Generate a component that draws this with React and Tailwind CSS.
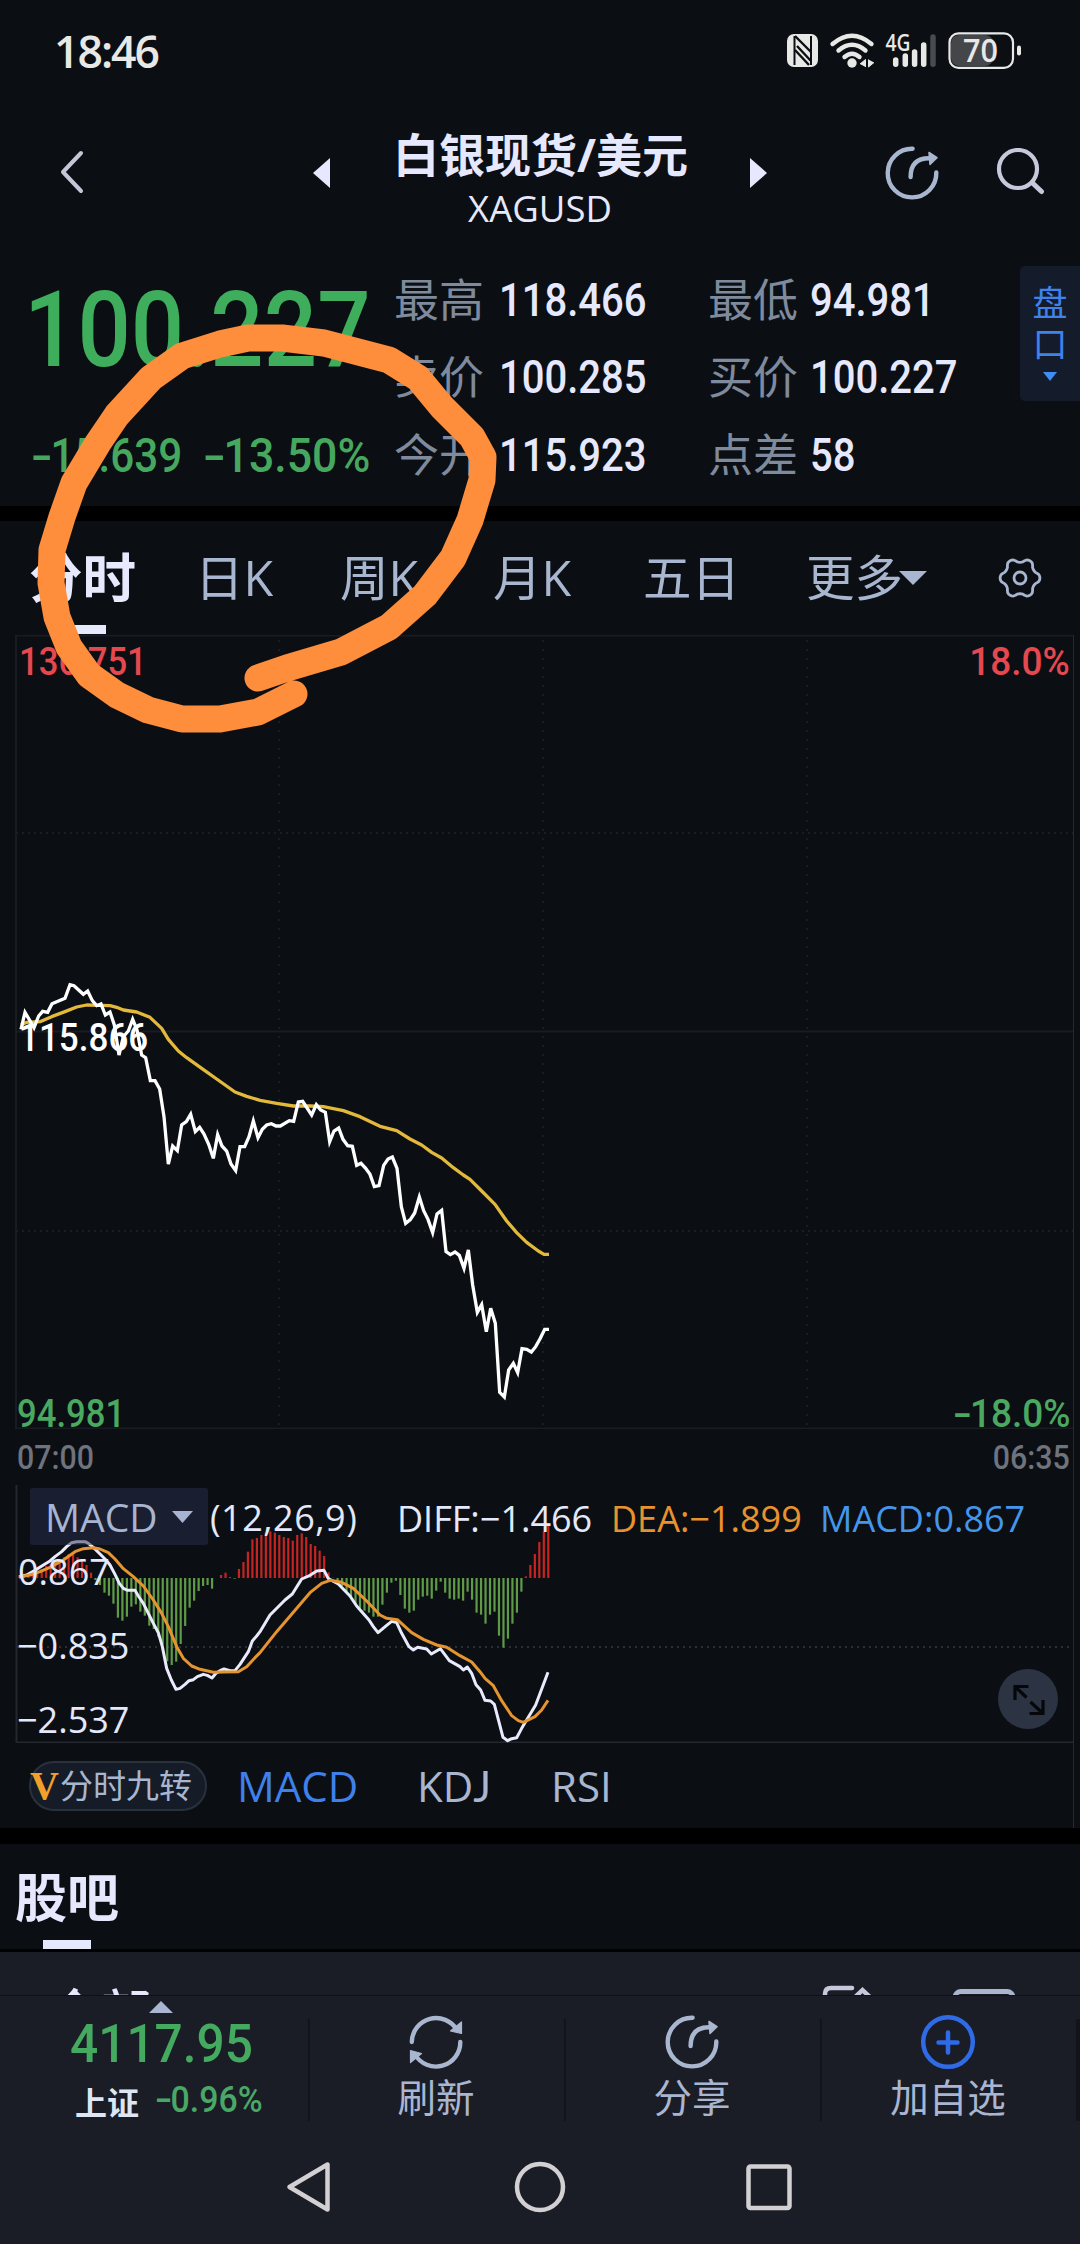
import React from 'react';

// Intraday price and average, x / y in thirds of a pixel
const PRICE_A = [
  [63, 208], [75, 157], [102, 203], [116, 168], [128, 154], [143, 157], [156, 131], [195, 115], [210, 74], [222, 77],
  [250, 103], [263, 93], [277, 122], [290, 137], [303, 132], [316, 165], [330, 156], [343, 195], [357, 285], [370, 230],
  [385, 213], [398, 178], [411, 210], [425, 285], [437, 293], [451, 362], [465, 362], [479, 387], [492, 470], [505, 612],
  [518, 558], [532, 572], [545, 495], [559, 485], [572, 463], [586, 515], [599, 502], [612, 522], [626, 553], [640, 595],
  [653, 524], [666, 558], [680, 573], [693, 612], [707, 632], [720, 560], [734, 560], [747, 530], [760, 483], [774, 533],
  [787, 508], [800, 495], [814, 491], [828, 498], [841, 498], [868, 482],
];
const PRICE_B = [
  [101, 214], [115, 156], [128, 154], [155, 195], [169, 164], [182, 180], [196, 187], [209, 275], [222, 243], [236, 234],
  [249, 268], [263, 287], [277, 289], [290, 346], [303, 340], [317, 355], [330, 373], [343, 410], [357, 407], [371, 346],
  [384, 327], [397, 321], [411, 355], [424, 470], [437, 520], [451, 509], [464, 489], [478, 441], [491, 482], [504, 508],
  [518, 548], [531, 492], [545, 481], [558, 605], [571, 614], [585, 606], [598, 616], [612, 655], [625, 600], [638, 705],
  [652, 787], [665, 764], [679, 845], [692, 775], [706, 820], [719, 1027], [733, 1041], [746, 960], [760, 940], [773, 968],
  [786, 896], [800, 898], [814, 906], [827, 890], [841, 865], [854, 838], [867, 838],
];
const AVG_A = [
  [63, 195], [80, 187], [120, 185], [155, 170], [195, 155], [230, 141], [260, 135], [300, 136], [330, 137], [350, 142],
  [370, 150], [410, 156], [450, 172], [485, 205], [505, 238], [535, 273], [560, 293], [605, 325], [650, 357], [705, 396],
  [740, 409],
];
const AVG_B = [
  [0, 151], [50, 160], [100, 168], [150, 168], [190, 170], [250, 182], [300, 200], [360, 229], [410, 242], [450, 267],
  [485, 285], [515, 307], [545, 324], [580, 353], [610, 375], [630, 388], [665, 423], [705, 463], [740, 513], [770, 548],
  [800, 577], [835, 603], [852, 613], [867, 613],
];

const DIFF_A = [
  [57, 290], [80, 285], [110, 268], [135, 252], [150, 243], [165, 230], [185, 215], [200, 200], [215, 188], [230, 185],
  [255, 185], [265, 190], [280, 202], [300, 222], [318, 240], [330, 255], [345, 283], [358, 310], [370, 325], [383, 331],
  [405, 331], [415, 348], [430, 370], [445, 400], [460, 430], [475, 458], [487, 500], [500, 565], [514, 600], [528, 628],
  [540, 625], [555, 613], [567, 602], [580, 599], [592, 590], [610, 583], [622, 586], [636, 594], [648, 580], [660, 572],
  [672, 567], [690, 572], [705, 572], [720, 553], [745, 515], [757, 483], [770, 468],
];
const DIFF_B = [
  [0, 455], [30, 405], [75, 360], [97, 342], [125, 297], [150, 286], [170, 273], [192, 271], [205, 296], [235, 312],
  [270, 348], [290, 378], [327, 420], [340, 440], [354, 458], [380, 436], [395, 424], [410, 428], [425, 460], [447, 500],
  [460, 510], [473, 502], [500, 507], [514, 522], [541, 506], [568, 542], [600, 560], [610, 570], [622, 561], [635, 580],
  [648, 614], [662, 630], [675, 661], [692, 663], [703, 673], [718, 730], [729, 772], [743, 782], [755, 776], [770, 773],
  [785, 745], [827, 675], [864, 577],
];
const DEA_A = [
  [57, 291], [90, 285], [120, 275], [150, 262], [190, 240], [225, 215], [250, 206], [280, 203], [300, 207], [325, 218],
  [345, 237], [370, 266], [400, 290], [430, 318], [460, 360], [485, 400], [505, 440], [530, 500], [550, 535], [575, 558],
  [600, 568], [640, 577], [670, 576], [715, 575], [740, 560], [765, 533],
];
const DEA_B = [
  [0, 518], [50, 455], [100, 397], [150, 338], [185, 310], [210, 301], [245, 307], [280, 325], [320, 363], [360, 405],
  [380, 415], [412, 419], [455, 458], [490, 478], [530, 495], [560, 502], [600, 527], [635, 546], [660, 575], [675, 595],
  [700, 617], [725, 662], [755, 707], [775, 722], [790, 727], [825, 710], [845, 690], [864, 661],
];

const BARS = [
  5, 7, 10, 14, 19, 26, 36, 42, 49, 56, 62, 72, 71, 62, 51, 39, 16, -6, -21, -44, -53, -77, -119, -128, -116, -86, -79,
  -101, -113, -143, -153, -176, -200, -250, -261, -251, -198, -144, -89, -68, -39, -24, -21, -32, 0, 9, 16, 3, -2, 27,
  48, 79, 116, 120, 129, 136, 140, 136, 129, 123, 120, 112, 129, 134, 123, 102, 96, 82, 66, 17, 1, -9, -24, -41, -56,
  -76, -91, -98, -104, -116, -116, -80, -44, -14, -8, -51, -92, -104, -98, -65, -56, -53, -62, -38, -11, -44, -62, -65,
  -62, -68, -41, -65, -104, -110, -137, -110, -101, -173, -209, -182, -137, -104, -41, 5, 39, 72, 108, 139, 164,
];

const MARK =
  '258,678 287,668 341,652 389,627 425,595 453,558 470,520 482,480 483,457 472,437 442,407 418,378 389,360 324,343 282,338 248,338 220,344 182,356 151,378 117,415 98,443 74,483 62,517 52,550 51,583 57,617 69,647 89,675 117,695 148,710 182,719 220,719 258,712 294,694';

const toPoints = (data, ox, oy) => data.map(([x, y]) => `${ox + x / 3},${oy + y / 3}`).join(' ');

const gearPath = () => {
  const pts = [];
  for (let i = 0; i < 72; i++) {
    const a = (i / 72) * Math.PI * 2;
    const c = Math.cos(6 * a);
    const r = 17.8 + 2.1 * Math.sign(c) * Math.pow(Math.abs(c), 0.6);
    pts.push(`${(22 + r * Math.cos(a)).toFixed(2)},${(22 + r * Math.sin(a)).toFixed(2)}`);
  }
  return pts.join(' ');
};

const Num = ({ className = '', children }) => (
  <span className={`inline-block font-medium whitespace-nowrap [font-family:Roboto,sans-serif] ${className}`}>{children}</span>
);

const Minus = () => <span className="inline-block w-[0.46em] origin-left scale-x-150">-</span>;

const ShareIcon = () => (
  <svg width="56" height="56" viewBox="0 0 56 56" fill="none" stroke="#a9b6cf" strokeWidth="4.4" strokeLinecap="round">
    <path d="M28.6 3.8A24.3 24.3 0 1 0 52.3 27.5" />
    <path d="M26.6 32C26.6 20.500 32 13.300 45 13.300" />
    <path d="M45 7.500L53 12.600L46 19.500Z" fill="#a9b6cf" strokeWidth="1.500" strokeLinejoin="round" />
  </svg>
);

const StatusBar = () => (
  <div className="flex h-[102px] items-center pl-[54px] text-[#e8e8e6]">
    <span className="w-[730px] text-[44.5px] leading-[60px] font-semibold tracking-[-2px]">18:46</span>
    <svg className="overflow-visible" width="240" height="40" viewBox="784 31 240 40" fill="none">
      <rect x="787" y="34" width="31" height="33" rx="7" fill="#e8e8e6" />
      <path d="M794.500 36V65M811 36V65" stroke="#0b0f14" strokeWidth="2" />
      <path d="M795 36L811 52M797 46L811 61M795 50L809 65" stroke="#0b0f14" strokeWidth="2.400" />
      <g stroke="#e8e8e6" strokeWidth="4.400" strokeLinecap="round">
        <path d="M832.500 44Q852 27.500 871.500 44" />
        <path d="M838.500 50.500Q852 39 865.500 50.500" />
        <path d="M844.500 57Q852 50.500 859.500 57" />
      </g>
      <circle cx="852" cy="63" r="4.700" fill="#e8e8e6" />
      <path d="M860 64L865.500 59.500V67M868.500 59.500V67L874 62.500" fill="#e8e8e6" stroke="#e8e8e6" strokeWidth="1" />
      <g strokeWidth="5.500" strokeLinecap="round" stroke="#e8e8e6">
        <path d="M895.700 60V64.300M905.300 56V64.300M914.600 52V64.300M923.700 45V64.300" />
        <path d="M933 37V64.300" stroke="#4a4b4e" />
      </g>
      <text x="885.500" y="51" fontSize="23" fontWeight="600" fill="#e8e8e6" textLength="25" lengthAdjust="spacingAndGlyphs">4G</text>
      <rect x="951" y="35" width="42" height="31" rx="8" fill="#45464a" />
      <rect x="949.500" y="33.300" width="63.500" height="34.500" rx="9" stroke="#e8e8e6" strokeWidth="2.200" />
      <path d="M1019 47.500V53.500" stroke="#e8e8e6" strokeWidth="4" strokeLinecap="round" />
      <text x="963" y="62" fontSize="32" fontWeight="600" fill="#e8e8e6" textLength="35" lengthAdjust="spacingAndGlyphs">70</text>
    </svg>
  </div>
);

const Header = () => (
  <div className="flex h-[142px] items-center">
    <svg className="ml-[58px] mr-[228px]" width="27" height="48" viewBox="0 0 27 48" fill="none">
      <path d="M23 4L5 23L23 42" stroke="#c5c7d8" strokeWidth="4" strokeLinecap="round" strokeLinejoin="round" />
    </svg>
    <svg width="17" height="30" viewBox="0 0 17 30"><path d="M17 0V30L0 15Z" fill="#e6e8fd" /></svg>
    <div className="flex h-full w-[420px] flex-col items-center pt-[29px] text-[#e6e8fd]">
      <h1 className="pl-[1px] text-[46px] leading-[46px] font-bold whitespace-nowrap">白银现货/美元</h1>
      <span className="mt-[13px] text-[36.5px] leading-[36px]">XAGUSD</span>
    </div>
    <svg width="17" height="30" viewBox="0 0 17 30"><path d="M0 0V30L17 15Z" fill="#e6e8fd" /></svg>
    <span className="ml-[117px] h-[56px]"><ShareIcon /></span>
    <svg className="ml-[55px]" width="50" height="50" viewBox="0 0 50 50" fill="none" stroke="#c8c8dc" strokeLinecap="round">
      <circle cx="23" cy="21" r="19" strokeWidth="4.200" />
      <path d="M37.500 35L46.500 43.500" strokeWidth="5" />
    </svg>
  </div>
);

const STATS = [
  ['最高', '118.466', '最低', '94.981'],
  ['卖价', '100.285', '买价', '100.227'],
  ['今开', '115.923', '点差', '58'],
];

const Quote = () => (
  <div className="flex h-[262px]">
    <div className="flex w-[394px] flex-col pt-[31px]">
      <Num className="ml-[24px] h-[110px] w-[360px] origin-left scale-x-[0.895] text-[105px] leading-[112px] text-[#3fae5c]">100.227</Num>
      <div className="mt-[40px] flex h-[60px] text-[48px] leading-[62px] text-[#46a85e]">
        <Num className="ml-[31px] w-[172px] origin-left scale-x-[0.88]"><Minus />15.639</Num>
        <Num className="origin-left scale-x-[0.93]"><Minus />13.50%</Num>
      </div>
    </div>
    <div className="w-[626px] pt-[17px]">
      {STATS.map(([a, av, b, bv]) => (
        <div key={a} className="flex h-[77.5px] items-center text-[45px] leading-[60px] text-[#7f8a9c]">
          <span className="w-[105px]">{a}</span>
          <Num className="w-[209px] origin-left scale-x-[0.87] text-[46px] leading-[62px] text-[#e6e8fd]">{av}</Num>
          <span className="w-[102px]">{b}</span>
          <Num className="origin-left scale-x-[0.87] text-[46px] leading-[62px] text-[#e6e8fd]">{bv}</Num>
        </div>
      ))}
    </div>
    <div className="mt-[22px] flex h-[135px] w-[60px] flex-col items-center rounded-l-[5px] bg-[#141b2a] pt-[16px] text-[35px] leading-[41px] text-[#3f82ea]">
      <span>盘</span>
      <span>口</span>
      <svg className="mt-[8px]" width="14" height="9" viewBox="0 0 14 9"><path d="M0 0H14L7 9Z" fill="#3f8cf5" /></svg>
    </div>
  </div>
);

const Tabs = () => (
  <div className="flex h-[114px] items-center text-[48.5px] leading-[60px] text-[#a9b6cf]">
    <div className="relative flex h-full w-[195px] items-center pb-[1px] pl-[29px] text-[53.5px] font-bold text-[#e7e9fc]">
      分时
      <div className="absolute bottom-[1px] left-[58px] h-[9px] w-[48px] bg-[#e7e9fc]"></div>
    </div>
    <span className="w-[145px] pb-[2px]">日K</span>
    <span className="w-[153px] pb-[2px]">周K</span>
    <span className="w-[150px] pb-[2px]">月K</span>
    <span className="w-[163px] pb-[2px]">五日</span>
    <span className="w-[93px] pb-[2px] whitespace-nowrap">更多</span>
    <svg width="28" height="14" viewBox="0 0 28 14"><path d="M0 0H28L14 14Z" fill="#a9b6cf" /></svg>
    <svg className="ml-[71px]" width="44" height="44" viewBox="0 0 44 44" fill="none" stroke="#a9b6cf" strokeWidth="2.800" strokeLinejoin="round">
      <polygon points={gearPath()} />
      <circle cx="22" cy="22" r="6" />
    </svg>
  </div>
);

const PriceChart = () => (
  <div className="relative h-[794px]">
    <svg width="1080" height="794" viewBox="0 635 1080 794" fill="none">
      <path d="M16 635.500H1073M16 1031.500H1073M16 1428.500H1073" stroke="#191d22" strokeWidth="2" />
      <path d="M16 635V1429" stroke="#191d22" strokeWidth="2" />
      <path d="M16 833H1073M16 1231H1073" stroke="#1a1e23" strokeWidth="2" strokeDasharray="2 4" />
      <path d="M279 640V1428M543 640V1428M807 640V1428" stroke="#1a1e23" strokeWidth="2" strokeDasharray="2 7" />
      <polyline points={`${toPoints(AVG_A, 0, 960)} ${toPoints(AVG_B, 260, 1050)}`} stroke="#e3b93c" strokeWidth="3.300" strokeLinejoin="round" />
      <polyline points={`${toPoints(PRICE_A, 0, 960)} ${toPoints(PRICE_B, 260, 1050)}`} stroke="#fff" strokeWidth="3.300" />
    </svg>
    <div className="absolute inset-0 text-[38.5px] leading-[40px]">
      <Num className="absolute top-[7px] left-[19px] origin-left scale-x-[0.9] text-[#e5484f]">136.751</Num>
      <Num className="absolute top-[7px] right-[10px] origin-right scale-x-[0.96] text-[#e5484f]">18.0%</Num>
      <Num className="absolute top-[383px] left-[19px] origin-left scale-x-[0.91] text-white">115.866</Num>
      <Num className="absolute bottom-[-5px] left-[17px] origin-left scale-x-[0.9] text-[#4aa860]">94.981</Num>
      <Num className="absolute right-[10px] bottom-[-5px] origin-right scale-x-[0.96] text-[#4aa860]"><Minus />18.0%</Num>
    </div>
  </div>
);

const MacdChart = () => (
  <div className="relative h-[258px] text-[36px] leading-[40px] whitespace-nowrap text-[#e4e8fb]">
    <svg width="1080" height="258" viewBox="0 1485 1080 258" fill="none">
      <path d="M16.500 1485V1742.500H1073" stroke="#24282e" strokeWidth="2" />
      <path d="M17 1647H1073" stroke="#2b2f34" strokeWidth="2" strokeDasharray="2 4" />
      {BARS.map((h, i) => (
        <rect
          key={i}
          x={18.2 + i * 4.483}
          y={h > 0 ? 1578 - h / 3 : 1578}
          width="2.2"
          height={Math.abs(h) / 3}
          fill={h > 0 ? '#c42422' : '#5f9a46'}
        />
      ))}
      <polyline points={`${toPoints(DIFF_A, 0, 1480)} ${toPoints(DIFF_B, 260, 1480)}`} stroke="#e8ebfb" strokeWidth="3" strokeLinejoin="round" />
      <polyline points={`${toPoints(DEA_A, 0, 1480)} ${toPoints(DEA_B, 260, 1480)}`} stroke="#e6942f" strokeWidth="3" strokeLinejoin="round" />
    </svg>
    <div className="absolute top-[3px] left-[30px] flex h-[57px] w-[178px] items-center rounded-[3px] bg-[#272f4c]/50 pl-[15px] text-[39px] text-[#a7b4d2]">
      <span className="w-[127px]">MACD</span>
      <svg width="21" height="12" viewBox="0 0 21 12"><path d="M0 0H21L10.500 12Z" fill="#a7b4d2" /></svg>
    </div>
    <span className="absolute top-[13px] left-[210px] tracking-[0.5px]">(12,26,9)</span>
    <span className="absolute top-[14px] left-[397px]">DIFF:−1.466</span>
    <span className="absolute top-[14px] left-[611px] text-[#e8922e]">DEA:−1.899</span>
    <span className="absolute top-[14px] left-[820px] text-[#4596ea]">MACD:0.867</span>
    <span className="absolute top-[67px] left-[18px]">0.867</span>
    <span className="absolute top-[141px] left-[17px]">−0.835</span>
    <span className="absolute top-[215px] left-[17px]">−2.537</span>
    <svg className="absolute top-[184px] left-[998px]" width="60" height="60" viewBox="0 0 60 60" fill="none">
      <circle cx="30" cy="30" r="30" fill="#2c3444" />
      <path d="M30.500 17.500H17V31M17 17.500L28.500 28.500M45 31V44.500H31.500M45 44.500L32.500 33" stroke="#05070b" strokeWidth="3.200" />
    </svg>
  </div>
);

const IndicatorTabs = () => (
  <div className="flex h-[85px] items-center text-[42px] leading-[50px] text-[#a9b6cf]">
    <div className="ml-[29px] flex h-[50px] w-[178px] items-center rounded-full border-2 border-[#29313d] bg-[#161c27] text-[33px] whitespace-nowrap">
      <span className="-ml-[1px] w-[30px] text-[40px] font-bold text-[#f3a02b] [font-family:'Liberation_Serif',serif]">V</span>
      分时九转
    </div>
    <span className="ml-[30px] w-[180px] text-[#3f80ea]">MACD</span>
    <span className="w-[134px]">KD<span className="[font-family:Lato,sans-serif]">J</span></span>
    <span>RSI</span>
  </div>
);

const Forum = () => (
  <>
    <div className="relative flex h-[105px] items-center pl-[15px] text-[52px] leading-[60px] font-bold text-[#e6e8fd]">
      股吧
      <div className="absolute bottom-0 left-[43px] h-[9px] w-[48px] bg-[#e6e8fd]"></div>
    </div>
    <div className="h-[3px] bg-black"></div>
    <div className="flex h-[43px] items-start overflow-hidden bg-[#1b1d26] pl-[49px]">
      <span className="mt-[30px] w-[772px] text-[51px] leading-[60px] font-medium text-[#e6e8fd]">全部</span>
      <svg className="mt-[32px]" width="200" height="40" viewBox="821 1984 200 40" fill="none" strokeLinecap="round" strokeWidth="4.500">
        <path d="M852 1988H831Q825 1988 825 1994V2018H860" stroke="#c8c8dc" />
        <path d="M848 2004L862.500 1990L872 1999" stroke="#c8c8dc" />
        <rect x="955" y="1991.500" width="58" height="30" rx="6" stroke="#a9b6cf" strokeWidth="5" />
      </svg>
    </div>
  </>
);

const Action = ({ icon, label }) => (
  <div className="flex h-[102px] w-[256px] flex-col items-center border-l-2 border-[#12141a] pr-[2px] text-[38.5px] leading-[44px] text-[#a9b6d2]">
    <span className="-mt-[5px] mb-[5px] h-[56px]">{icon}</span>
    {label}
  </div>
);

const BottomBar = () => (
  <div className="flex h-[138px] border-t border-[#0e1016] bg-[#1b1d26]">
    <div className="relative w-[308px]">
      <svg className="absolute top-[5px] left-[149px]" width="24" height="12" viewBox="0 0 24 12"><path d="M0 12H24L12 0Z" fill="#a9b6d2" /></svg>
      <div className="pt-[17px] pl-[70px]">
        <Num className="h-[60px] origin-left scale-x-[0.91] text-[54.5px] leading-[60px] text-[#44aa60]">4117.95</Num>
      </div>
      <div className="flex h-[44px] items-center pt-[10px] pl-[75px] text-[32px] leading-[40px]">
        <span className="w-[80px] pt-[6px] font-bold text-[#dde6f2]">上证</span>
        <Num className="origin-left scale-x-[0.94] text-[36px] text-[#4aa866]"><Minus />0.96%</Num>
      </div>
    </div>
    <div className="flex flex-1 pt-[23px]">
      <Action
        label="刷新"
        icon={
          <svg width="56" height="56" viewBox="0 0 56 56" fill="none" stroke="#a9b6cf" strokeWidth="4.400" strokeLinecap="round">
            <path d="M3.800 28A24.300 24.300 0 0 1 49 16M52.300 28A24.300 24.300 0 0 1 7 40.500" />
            <path d="M53.500 8V19.500L42.500 17Z M2.500 48.500V36.500L13.500 39.500Z" fill="#a9b6cf" strokeWidth="1.200" strokeLinejoin="round" />
          </svg>
        }
      />
      <Action label="分享" icon={<ShareIcon />} />
      <Action
        label="加自选"
        icon={
          <svg width="56" height="56" viewBox="0 0 56 56" fill="none" stroke="#2f6be6" strokeWidth="4.500" strokeLinecap="round">
            <circle cx="28" cy="28" r="24.800" />
            <path d="M28 18.500V38.500M18.500 28.500H37.500" />
          </svg>
        }
      />
      <div className="h-[102px] w-[4px] bg-[#12141a]"></div>
    </div>
  </div>
);

const NavBar = () => (
  <div className="flex h-[111px] items-start bg-[#1b1d26] pt-[26px] pl-[284px]">
    <svg width="512" height="56" viewBox="284 2159 512 56" fill="none" stroke="#d2d0d3" strokeWidth="4.500" strokeLinejoin="round">
      <path d="M289.500 2187L327.500 2164.500V2209.500Z" />
      <circle cx="540" cy="2187" r="23" />
      <rect x="748.500" y="2166.500" width="41" height="41.500" rx="2" />
    </svg>
  </div>
);

const App = () => {
  return (
    <div className="relative h-[2244px] w-[1080px] overflow-hidden bg-[#0b0f14] [font-family:'Open_Sans','Noto_Sans_CJK_SC',sans-serif]">
      <StatusBar />
      <Header />
      <Quote />
      <div className="h-[15px] bg-black"></div>
      <div className="relative">
        <Tabs />
        <PriceChart />
        <div className="flex h-[56px] items-center justify-between pt-[2px] pr-[10px] pl-[17px] text-[33px] leading-[40px] text-[#6e737d]">
          <Num className="origin-left scale-x-[0.92]">07:00</Num>
          <Num className="origin-right scale-x-[0.92]">06:35</Num>
        </div>
        <MacdChart />
        <IndicatorTabs />
        <div className="absolute top-[114px] right-[6px] bottom-0 w-px bg-[#262a30]"></div>
      </div>
      <div className="h-[16px] bg-black"></div>
      <Forum />
      <BottomBar />
      <NavBar />

      {/* hand-drawn marker */}
      <svg className="pointer-events-none absolute top-0 left-0" width="520" height="760" fill="none">
        <polyline points={MARK} stroke="#fe8e3b" strokeWidth="27" strokeLinecap="round" strokeLinejoin="round" />
      </svg>
    </div>
  );
};

export default App;
